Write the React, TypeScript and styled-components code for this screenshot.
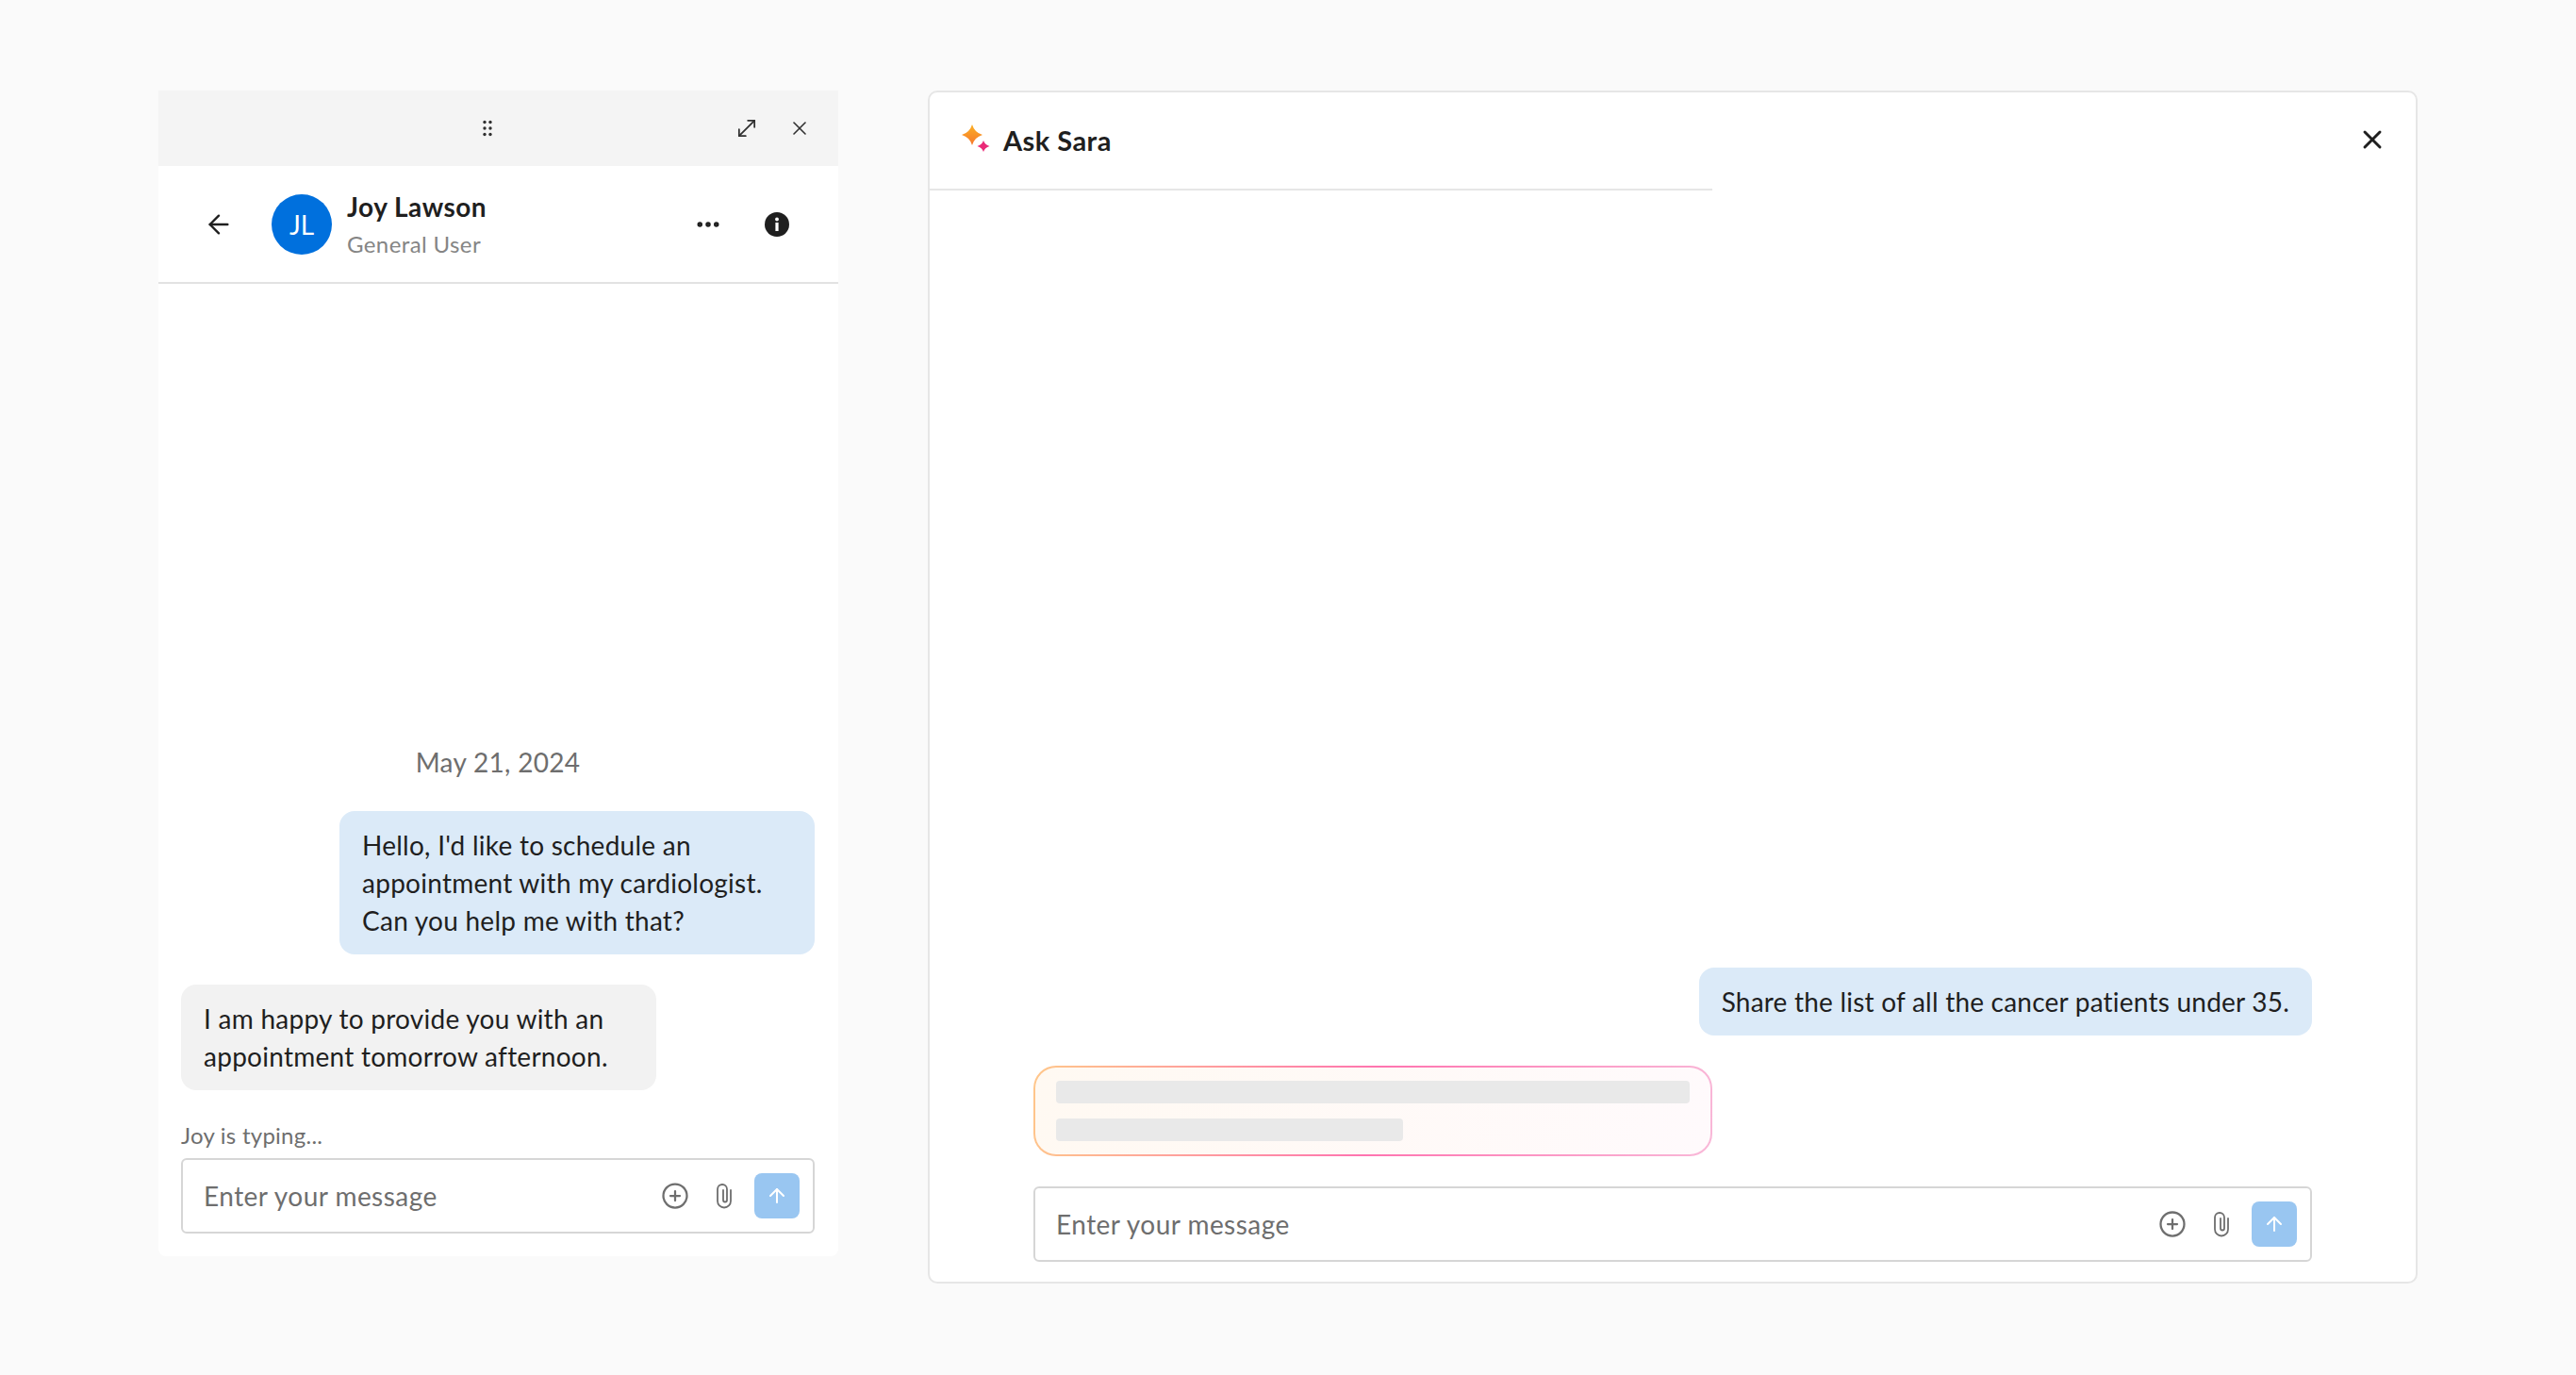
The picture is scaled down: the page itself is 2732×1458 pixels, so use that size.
import React from 'react'
import styled, { createGlobalStyle } from 'styled-components'
import { ArrowLeft, ArrowUp, CirclePlus, Ellipsis, MoveDiagonal, X } from 'lucide-react'

const GlobalStyle = createGlobalStyle`
    html, body {
        margin: 0;
        padding: 0;
        background-color: #fafafa;
    }
    * {
        box-sizing: border-box;
    }
    body {
        font-family: "Lato", "Open Sans", sans-serif;
        color: #1f1f1f;
    }
`

const Page = styled.div`
    width: 2732px;
    height: 1458px;
    display: flex;
    align-items: flex-start;
    gap: 95px;
    padding: 96px 0 0 168px;
`

// Left chat window
const ChatWindow = styled.section`
    width: 721px;
    height: 1236px;
    background-color: #fff;
    border-radius: 0 0 8px 8px;
    display: flex;
    flex-direction: column;
`

const DragBar = styled.div`
    height: 80px;
    flex-shrink: 0;
    background-color: #f4f4f4;
    display: flex;
    align-items: center;
    gap: 30px;
    padding: 0 29px 0 337px;
    color: #303030;
`

const DragHandle = styled.svg`
    width: 24px;
    height: 24px;
    margin-right: auto;
`

const ContactHeader = styled.header`
    height: 125px;
    flex-shrink: 0;
    border-bottom: 2px solid #e2e2e2;
    display: flex;
    align-items: center;
    padding: 0 51px 0 48px;
    color: #1f1f1f;
`

const Avatar = styled.div`
    width: 64px;
    height: 64px;
    border-radius: 50%;
    background-color: #0070dd;
    color: #fff;
    font-size: 28px;
    display: flex;
    align-items: center;
    justify-content: center;
    margin-left: 40px;
`

const ContactInfo = styled.div`
    margin-left: 16px;
    margin-right: auto;
    display: flex;
    flex-direction: column;
    gap: 6px;
`

const ContactName = styled.div`
    font-size: 28px;
    line-height: 36px;
    font-weight: 700;
    letter-spacing: 0.5px;
    color: #1f1f1f;
`

const ContactRole = styled.div`
    font-size: 24px;
    line-height: 32px;
    letter-spacing: 0.4px;
    color: #858585;
`

const InfoIcon = styled.svg`
    width: 28px;
    height: 28px;
    margin-left: 44px;
`

const ChatBody = styled.div`
    flex: 1;
    display: flex;
    flex-direction: column;
    justify-content: flex-end;
    gap: 32px;
    padding: 0 25px 24px 24px;
`

const DateLabel = styled.div`
    text-align: center;
    font-size: 28px;
    line-height: 40px;
    letter-spacing: 0.3px;
    color: #6e6e6e;
`

const Bubble = styled.div<{ $mine?: boolean; $wide?: boolean }>`
    align-self: ${({ $mine }) => ($mine ? 'flex-end' : 'flex-start')};
    width: ${({ $wide }) => ($wide ? 'auto' : '504px')};
    background-color: ${({ $mine }) => ($mine ? '#dbeaf8' : '#f2f2f2')};
    border-radius: 16px;
    padding: 16px 24px;
    font-size: 28px;
    line-height: 40px;
    letter-spacing: ${({ $wide }) => ($wide ? '0.22px' : '0.26px')};
    color: #1f1f1f;
    white-space: pre-line;
`

const ComposerGroup = styled.div`
    display: flex;
    flex-direction: column;
    gap: 8px;
`

const TypingLabel = styled.div`
    font-size: 24px;
    line-height: 32px;
    letter-spacing: 0.25px;
    color: #6e6e6e;
`

const Composer = styled.div`
    height: 80px;
    flex-shrink: 0;
    border: 2px solid #d6d6d6;
    border-radius: 6px;
    background-color: #fff;
    display: flex;
    align-items: center;
    padding: 0 14px 0 22px;
    color: #6e6e6e;
`

const Placeholder = styled.div`
    font-size: 28px;
    letter-spacing: 0.46px;
    margin-right: auto;
`

const ClipIcon = styled.svg`
    width: 24px;
    height: 32px;
    margin-left: 25px;
`

const SendButton = styled.button`
    width: 48px;
    height: 48px;
    margin-left: 20px;
    border: none;
    padding: 0;
    border-radius: 8px;
    background-color: #99c6f1;
    color: #fff;
    display: flex;
    align-items: center;
    justify-content: center;
`

// Right assistant window
const AssistantWindow = styled.section`
    width: 1580px;
    height: 1265px;
    background-color: #fff;
    border: 2px solid #e6e6e6;
    border-radius: 10px;
    display: flex;
    flex-direction: column;
    position: relative;
`

const AssistantHeader = styled.header`
    width: 830px;
    height: 104px;
    flex-shrink: 0;
    border-bottom: 2px solid #e6e6e6;
    display: flex;
    align-items: center;
    gap: 13px;
    padding: 0 0 2px 33px;
`

const AssistantTitle = styled.h1`
    margin: 0;
    font-size: 29px;
    font-weight: 700;
    letter-spacing: 0.45px;
    color: #1f1f1f;
`

const CloseButton = styled.button`
    position: absolute;
    top: 34px;
    right: 30px;
    width: 32px;
    height: 32px;
    padding: 0;
    border: none;
    background: none;
    color: #1f1f1f;
    display: flex;
`

const AssistantBody = styled.div`
    flex: 1;
    display: flex;
    flex-direction: column;
    justify-content: flex-end;
    gap: 32px;
    padding: 0 110px 21px 110px;
`

const SkeletonCard = styled.div`
    width: 720px;
    height: 96px;
    padding: 14px 22px;
    border: 2px solid transparent;
    border-radius: 24px;
    background:
        linear-gradient(100deg, #fff9f2, #fffafc) padding-box,
        linear-gradient(100deg, #ffc78a 0%, #ff74b0 50%, #f9b8d8 100%) border-box;
    display: flex;
    flex-direction: column;
    gap: 16px;
`

const SkeletonBar = styled.div<{ $width: number }>`
    width: ${({ $width }) => $width}px;
    height: 24px;
    border-radius: 4px;
    background-color: #e9e9e9;
`

const DotsGrip = () => (
    <DragHandle viewBox="0 0 24 24" fill="currentColor">
        {[5.5, 12, 18.5].map((cy) => (
            <React.Fragment key={cy}>
                <circle cx="9" cy={cy} r="1.7" />
                <circle cx="15" cy={cy} r="1.7" />
            </React.Fragment>
        ))}
    </DragHandle>
)

const Clip = () => (
    <ClipIcon viewBox="0 0 24 32" fill="none" stroke="currentColor" strokeWidth="1.8" strokeLinecap="round">
        <path d="M19 10v11.500a7 7 0 0 1-14 0V9a5 5 0 0 1 10 0v11.500a2 2 0 0 1-4 0V10" />
    </ClipIcon>
)

const Sparkles = () => (
    <svg width="32" height="32" viewBox="0 1 32 32">
        <defs>
            <linearGradient id="big-star" x1="0" y1="0" x2="0" y2="1">
                <stop offset="0" stopColor="#fbb024" />
                <stop offset="1" stopColor="#f6782d" />
            </linearGradient>
        </defs>
        <path d="M12 1Q14.500 9.500 23 12 14.500 14.500 12 23 9.500 14.500 1 12 9.500 9.500 12 1z" fill="url(#big-star)" />
        <path d="M24 18Q25.500 22.500 30.500 24 25.500 25.500 24 30 22.500 25.500 17.500 24 22.500 22.500 24 18z" fill="#ea2a78" />
    </svg>
)

const MessageComposer = () => (
    <Composer>
        <Placeholder>Enter your message</Placeholder>
        <CirclePlus size={30} strokeWidth={1.8} />
        <Clip />
        <SendButton>
            <ArrowUp size={24} strokeWidth={2} />
        </SendButton>
    </Composer>
)

const App: React.FC = () => {
    return (
        <>
            <GlobalStyle />
            <Page>
                <ChatWindow>
                    <DragBar>
                        <DotsGrip />
                        <MoveDiagonal size={28} strokeWidth={1.5} />
                        <X size={24} strokeWidth={1.6} />
                    </DragBar>
                    <ContactHeader>
                        <ArrowLeft size={32} strokeWidth={1.8} />
                        <Avatar>JL</Avatar>
                        <ContactInfo>
                            <ContactName>Joy Lawson</ContactName>
                            <ContactRole>General User</ContactRole>
                        </ContactInfo>
                        <Ellipsis size={30} strokeWidth={2.4} />
                        <InfoIcon viewBox="0 0 28 28">
                            <circle cx="14" cy="14" r="13" fill="#1f1f1f" />
                            <circle cx="14" cy="8.500" r="1.900" fill="#fff" />
                            <rect x="12.400" y="12" width="3.200" height="9" fill="#fff" />
                        </InfoIcon>
                    </ContactHeader>
                    <ChatBody>
                        <DateLabel>May 21, 2024</DateLabel>
                        <Bubble $mine>{"Hello, I'd like to schedule an\nappointment with my cardiologist.\nCan you help me with that?"}</Bubble>
                        <Bubble>{'I am happy to provide you with an\nappointment tomorrow afternoon.'}</Bubble>
                        <ComposerGroup>
                            <TypingLabel>Joy is typing...</TypingLabel>
                            <MessageComposer />
                        </ComposerGroup>
                    </ChatBody>
                </ChatWindow>
                <AssistantWindow>
                    <AssistantHeader>
                        <Sparkles />
                        <AssistantTitle>Ask Sara</AssistantTitle>
                    </AssistantHeader>
                    <CloseButton>
                        <X size={32} strokeWidth={2.2} />
                    </CloseButton>
                    <AssistantBody>
                        <Bubble $mine $wide>Share the list of all the cancer patients under 35.</Bubble>
                        <SkeletonCard>
                            <SkeletonBar $width={672} />
                            <SkeletonBar $width={368} />
                        </SkeletonCard>
                        <MessageComposer />
                    </AssistantBody>
                </AssistantWindow>
            </Page>
        </>
    )
}

export default App
